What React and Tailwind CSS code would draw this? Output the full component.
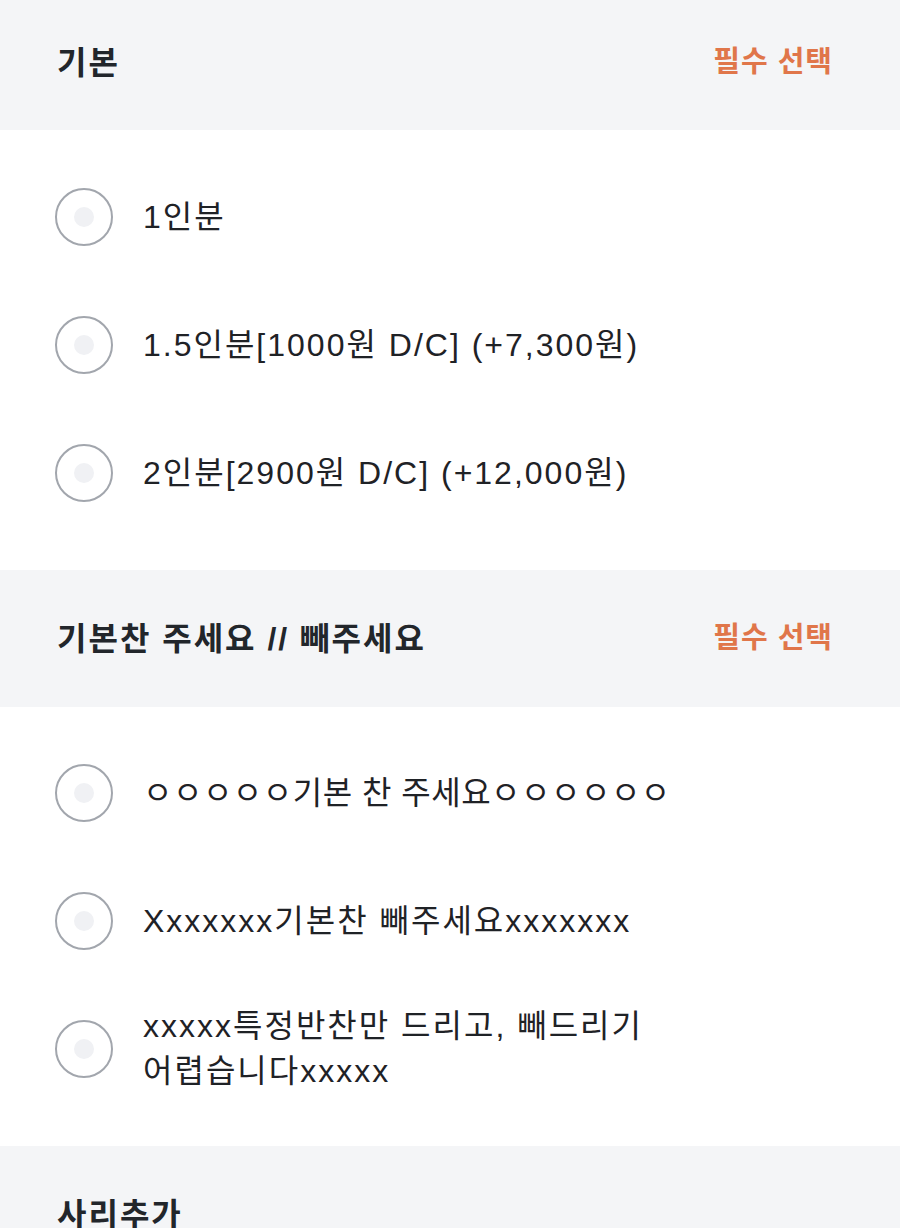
import React from "react";

const font = { fontFamily: '"Liberation Sans", "Noto Sans CJK KR", sans-serif' };

function Header({ title, tag, h, extra = "" }) {
  return (
    <div className={`flex items-center justify-between bg-[#f4f5f7] pl-[57px] pr-[67px] ${h} ${extra}`}>
      <span className="text-[32px] font-bold text-[#22262b] tracking-[2px]">{title}</span>
      {tag && <span className="text-[29px] font-bold text-[#e0764a] tracking-[1px]">{tag}</span>}
    </div>
  );
}

function Radio() {
  return (
    <div className="flex h-[58px] w-[58px] shrink-0 items-center justify-center rounded-full border-2 border-[#a2a6ad] bg-white">
      <div className="h-[20px] w-[20px] rounded-full bg-[#f0f1f4]" />
    </div>
  );
}

function Item({ children, track = "tracking-[2px]" }) {
  return (
    <div className="flex h-[128px] items-center pl-[55px]">
      <Radio />
      <div className={`ml-[30px] text-[32px] leading-[45px] text-[#1f2226] ${track}`}>{children}</div>
    </div>
  );
}

export default function App() {
  return (
    <div style={font} className="w-[900px] h-[1228px] overflow-hidden bg-white">
      <Header title="기본" tag="필수 선택" h="h-[130px]" extra="pb-[4px]" />
      <div className="pt-[23px] pb-[33px]">
        <Item>1인분</Item>
        <Item>1.5인분[1000원 D/C] (+7,300원)</Item>
        <Item>2인분[2900원 D/C] (+12,000원)</Item>
      </div>
      <Header title="기본찬 주세요 // 빼주세요" tag="필수 선택" h="h-[137px]" />
      <div className="pt-[22px] pb-[33px]">
        <Item track="tracking-[0.5px]">ㅇㅇㅇㅇㅇ기본 찬 주세요ㅇㅇㅇㅇㅇㅇ</Item>
        <Item>Xxxxxxx기본찬 빼주세요xxxxxxx</Item>
        <Item>
          xxxxx특정반찬만 드리고, 빼드리기
          <br />
          어렵습니다xxxxx
        </Item>
      </div>
      <Header title="사리추가" h="h-[137px]" />
    </div>
  );
}
